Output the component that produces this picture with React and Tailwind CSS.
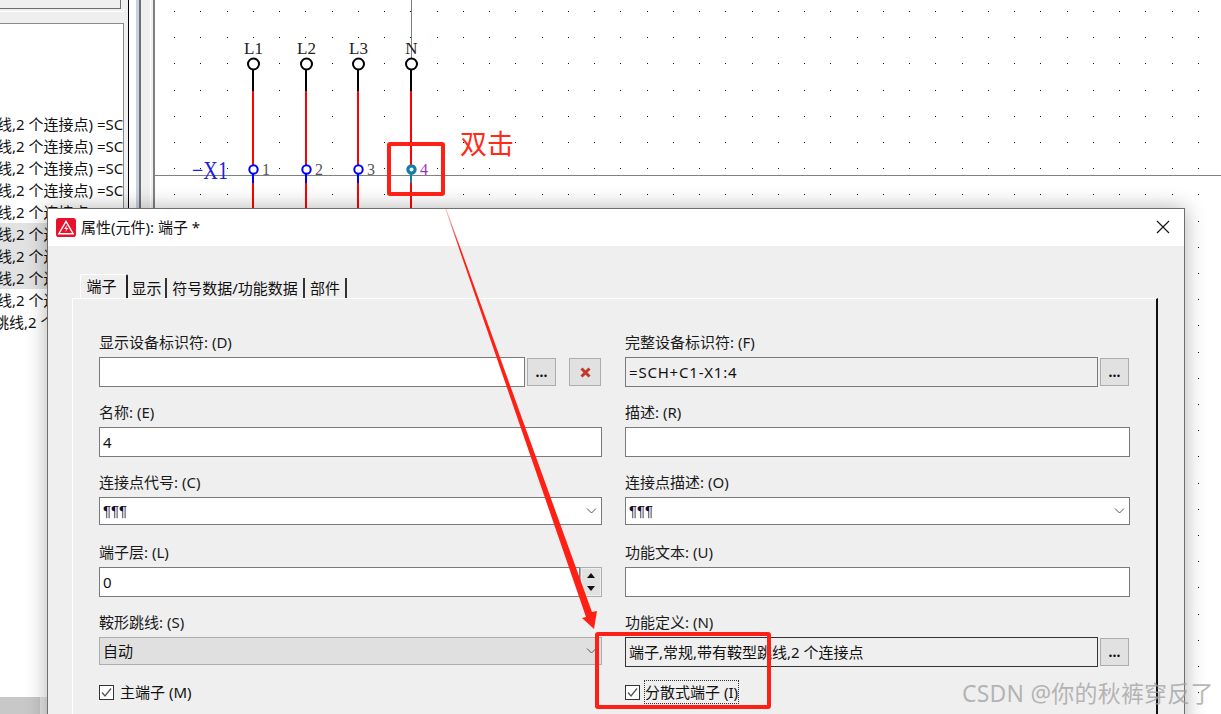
const dotXs = Array.from({ length: 41 }, (_, i) => Math.round(174 + i * 26.25))
const dotYs = Array.from({ length: 28 }, (_, i) => Math.round(11 + i * 26.2))

const listRows = [
  { y: 'bg-white', text: '线,2 个连接点) =SCH+C1', ml: '-ml-[3px]' },
  { y: 'bg-white', text: '线,2 个连接点) =SCH+C1', ml: '-ml-[3px]' },
  { y: 'bg-white', text: '线,2 个连接点) =SCH+C1', ml: '-ml-[3px]' },
  { y: 'bg-white', text: '线,2 个连接点) =SCH+C1', ml: '-ml-[3px]' },
  { y: 'bg-white', text: '线,2 个连接点) =SCH+C1', ml: '-ml-[3px]' },
  { y: 'bg-[#e2e2e2]', text: '线,2 个连接点) =SCH+C1', ml: '-ml-[3px]' },
  { y: 'bg-[#e2e2e2]', text: '线,2 个连接点) =SCH+C1', ml: '-ml-[3px]' },
  { y: 'bg-[#e2e2e2]', text: '线,2 个连接点) =SCH+C1', ml: '-ml-[3px]' },
  { y: 'bg-white', text: '线,2 个连接点) =SCH+C1', ml: '-ml-[3px]' },
  { y: 'bg-white', text: '跳线,2 个连接点) =SCH+C1', ml: '-ml-[6px]' },
]

const columns = [
  { x: 253, top: 'L1', num: '1' },
  { x: 306, top: 'L2', num: '2' },
  { x: 358, top: 'L3', num: '3' },
  { x: 411, top: 'N', num: '4' },
]

function Diagram() {
  return (
    <svg viewBox="155 0 1066 714" className="block w-[1066px] h-[714px]">
      {dotXs.map((x) =>
        dotYs.map((y) => <rect key={x + '-' + y} x={x} y={y} width="1" height="1" fill="#111" />)
      )}
      <line x1="155" y1="175.5" x2="1221" y2="175.5" stroke="#808080" />
      <line x1="411.5" y1="0" x2="411.5" y2="58" stroke="#808080" />
      {columns.map((c) => {
        const active = c.num === '4'
        const nodeColor = active ? '#0f7fa5' : '#0000ff'
        return (
          <g key={c.top}>
            <text x={c.x + 0.5} y="54" textAnchor="middle" fontFamily="Liberation Serif" fontSize="17" fill="#222">{c.top}</text>
            <circle cx={c.x + 0.5} cy="64" r="5.5" fill="#fff" stroke="#000" strokeWidth="2" />
            <line x1={c.x} y1="70" x2={c.x} y2="91" stroke="#000" strokeWidth="2" />
            <line x1={c.x} y1="91" x2={c.x} y2="165" stroke="#ff0000" strokeWidth="2" />
            <line x1={c.x} y1="174" x2={c.x} y2="183" stroke={nodeColor} strokeWidth="2" />
            <line x1={c.x} y1="183" x2={c.x} y2="214" stroke="#ff0000" strokeWidth="2" />
            <circle cx={c.x + 0.5} cy="169.5" r={active ? 3.6 : 4.2} fill="#fff" stroke={nodeColor} strokeWidth={active ? 3.2 : 2} />
            <text x={c.x + 9} y="175" fontFamily="Liberation Serif" fontSize="16" fill={active ? '#a030c0' : '#555'}>{c.num}</text>
          </g>
        )
      })}
      <text x="192" y="179" fontFamily="Liberation Serif" fontSize="26" fill="#1f1fe0" textLength="36" lengthAdjust="spacingAndGlyphs">−X1</text>
    </svg>
  )
}

function Label({ children }) {
  return <div className="h-5 mb-[5px] leading-5 text-[15px] text-[#1a1a1a]">{children}</div>
}

function TextBox({ value, className = '' }) {
  return (
    <div className={'h-[30px] px-[3px] flex items-center border border-[#7a7a7a] bg-white text-[15px] text-[#111] ' + className}>
      {value}
    </div>
  )
}

function Chevron() {
  return (
    <svg width="11" height="6" viewBox="0 0 11 6" className="shrink-0">
      <path d="M1 0.5 L5.5 5 L10 0.5" fill="none" stroke="#555" strokeWidth="1" />
    </svg>
  )
}

function Combo({ value, disabled, mark }) {
  return (
    <div className={'h-[28px] pl-[3px] pr-[4px] flex items-center justify-between border text-[15px] text-[#111] ' + (disabled ? 'bg-[#e0e0e0] border-[#adadad]' : 'bg-white border-[#7a7a7a]')}>
      <span className={mark ? "font-['Liberation_Sans',sans-serif] text-[#1a0a30]" : ''}>{value}</span>
      <Chevron />
    </div>
  )
}

function DotsButton() {
  return (
    <button className="w-[29px] h-[28px] shrink-0 bg-[#e1e1e1] border border-[#adadad] text-[14px] font-bold leading-[26px] text-[#111]">...</button>
  )
}

function Check({ label, focused }) {
  return (
    <div className="flex items-center h-5">
      <svg width="15" height="15" viewBox="0 0 15 15" className="shrink-0">
        <rect x="0.5" y="0.5" width="14" height="14" fill="#fff" stroke="#333" />
        <path d="M3 7.5 L6 11 L12 3.5" fill="none" stroke="#555" strokeWidth="1.3" />
      </svg>
      <span className={'text-[15px] text-[#111] leading-[22px] ' + (focused ? 'ml-[5px] outline-1 outline-dotted outline-[#333]' : 'ml-[6px]')}>{label}</span>
    </div>
  )
}

function Dialog() {
  return (
    <div className="absolute left-[47px] top-[208px] w-[1138px] h-[530px] flex flex-col bg-[#efefef] border border-[#6f6f6f] shadow-[0_0_20px_rgba(0,0,0,0.3)]">
      <div className="h-[37px] shrink-0 bg-white flex items-center pl-2 pr-[14px]">
        <svg width="20" height="19" viewBox="0 0 21 20" className="shrink-0">
          <rect width="21" height="20" rx="3" fill="#e8102a" />
          <path d="M10.5 3.5 L18 16.5 H3 Z" fill="none" stroke="#fff" strokeWidth="1.5" />
          <path d="M11.5 7 L8.5 11.5 H11 L9.5 15 L13 10.5 H10.8 Z" fill="#fff" />
        </svg>
        <span className="ml-[5px] text-[15px] text-[#111]">属性(元件): 端子 *</span>
        <svg width="14" height="14" viewBox="0 0 14 14" className="ml-auto -mt-[2px]">
          <path d="M1 1 L13 13 M13 1 L1 13" stroke="#111" strokeWidth="1.1" />
        </svg>
      </div>

      <div className="flex-1 flex flex-col pt-[28px] pl-[24px] min-h-0">
        {/* Tabs */}
        <div className="flex items-end h-6 ml-2 text-[15px] text-[#111]">
          <div className="w-[48px] h-6 pr-1 flex items-center justify-center border-t border-l border-white border-r-2 border-r-[#222] rounded-t-[2px]">端子</div>
          <div className="w-[39px] h-5 flex items-center justify-center border-r-2 border-[#333]">显示</div>
          <div className="w-[138px] h-5 flex items-center justify-center border-r-2 border-[#333]">符号数据/功能数据</div>
          <div className="w-[42px] h-5 flex items-center justify-center border-r-2 border-[#333]">部件</div>
        </div>

        {/* Tab panel */}
        <div className="w-[1086px] flex-1 pt-[33px] pl-[26px] border-t border-l border-white border-r-2 border-r-[#111]">
          <div className="grid grid-cols-[503px_505px] gap-x-[23px] auto-rows-[70px]">
            <div>
              <Label>显示设备标识符: (D)</Label>
              <div className="flex items-center">
                <TextBox value="" className="w-[426px]" />
                <div className="ml-[2px]"><DotsButton /></div>
                <button className="ml-[13px] w-[32px] h-[28px] flex items-center justify-center bg-[#e1e1e1] border border-[#adadad]">
                  <svg width="11" height="11" viewBox="0 0 11 11">
                    <path d="M1.5 1.5 L9.5 9.5 M9.5 1.5 L1.5 9.5" stroke="#c0392b" strokeWidth="3" />
                  </svg>
                </button>
              </div>
            </div>
            <div>
              <Label>完整设备标识符: (F)</Label>
              <div className="flex items-center">
                <TextBox value="=SCH+C1-X1:4" className="w-[473px] !bg-[#efefef] tracking-[0.8px]" />
                <div className="ml-[2px]"><DotsButton /></div>
              </div>
            </div>

            <div>
              <Label>名称: (E)</Label>
              <TextBox value="4" />
            </div>
            <div>
              <Label>描述: (R)</Label>
              <TextBox value="" />
            </div>

            <div>
              <Label>连接点代号: (C)</Label>
              <Combo value="¶¶¶" mark />
            </div>
            <div>
              <Label>连接点描述: (O)</Label>
              <Combo value="¶¶¶" mark />
            </div>

            <div>
              <Label>端子层: (L)</Label>
              <div className="flex">
                <TextBox value="0" className="w-[481px]" />
                <div className="w-[22px] h-[30px] flex flex-col justify-between p-px border border-[#adadad]">
                  <div className="h-[13px] bg-[#e1e1e1] flex items-center justify-center">
                    <svg width="8" height="5" viewBox="0 0 8 5"><path d="M4 0 L8 5 H0 Z" fill="#111" /></svg>
                  </div>
                  <div className="h-[13px] bg-[#e1e1e1] flex items-center justify-center">
                    <svg width="8" height="5" viewBox="0 0 8 5"><path d="M0 0 H8 L4 5 Z" fill="#111" /></svg>
                  </div>
                </div>
              </div>
            </div>
            <div>
              <Label>功能文本: (U)</Label>
              <TextBox value="" />
            </div>

            <div>
              <Label>鞍形跳线: (S)</Label>
              <Combo value="自动" disabled />
            </div>
            <div>
              <Label>功能定义: (N)</Label>
              <div className="flex items-center">
                <TextBox value="端子,常规,带有鞍型跳线,2 个连接点" className="w-[473px] !bg-[#efefef] !border-[#333]" />
                <div className="ml-[2px]"><DotsButton /></div>
              </div>
            </div>

            <Check label="主端子 (M)" />
            <Check label="分散式端子 (I)" focused />
          </div>
        </div>
      </div>
    </div>
  )
}

export default function App() {
  return (
    <div className="relative w-[1221px] h-[714px] overflow-hidden flex bg-white font-['Noto_Sans','Noto_Sans_CJK_SC',sans-serif]">
      {/* Left pane */}
      <div className="w-[128px] shrink-0 flex flex-col bg-[#efefef] border-r border-[#efefef]">
        <div className="h-[9px] w-[121px] shrink-0 border-b border-r border-[#6f6f6f]" />
        <div className="h-[3px] w-[124px] shrink-0 border-b border-r border-white" />
        <div className="h-[11px] shrink-0" />
        <div className="flex-1 w-[124px] flex flex-col border-t border-r border-[#8a8a8a] bg-white">
          <div className="h-[89px] shrink-0" />
          {listRows.map((r, i) => (
            <div key={i} className={'h-[22px] shrink-0 overflow-hidden whitespace-nowrap text-[15px] leading-[22px] text-[#111] ' + r.y}>
              <div className={r.ml}>{r.text}</div>
            </div>
          ))}
          <div className="flex-1" />
          <div className="h-[17px] shrink-0 flex bg-[#e4e4e4]">
            <div className="w-[40px] bg-[#c8c8c8]" />
          </div>
        </div>
      </div>

      {/* Splitter */}
      <div className="w-[27px] shrink-0 flex border-l border-black bg-[#efefef]">
        <div className="w-[7px] bg-white" />
        <div className="w-[3px] bg-[#c8d0e8]" />
        <div className="w-[2px] bg-[#707070]" />
        <div className="w-[9px]" />
        <div className="w-[1px] bg-white" />
        <div className="w-[2px]" />
        <div className="w-[2px] bg-[#808080]" />
      </div>

      {/* Canvas */}
      <div className="flex-1 min-w-0">
        <Diagram />
      </div>

      <Dialog />

      {/* Annotations */}
      <div className="absolute left-[387px] top-[142px] w-[58px] h-[54px] border-[4px] border-[#ff2015] rounded-[3px]" />
      <span className="absolute left-[460px] top-[125px] text-[27px] leading-[38px] text-[#ff2a1a]">双击</span>
      <svg viewBox="0 0 1221 714" className="absolute left-0 top-0 w-[1221px] h-[714px] pointer-events-none">
        <defs>
          <linearGradient id="arrowFade" gradientUnits="userSpaceOnUse" x1="0" y1="208" x2="0" y2="250">
            <stop offset="0" stopColor="#ff2015" stopOpacity="0.25" />
            <stop offset="1" stopColor="#ff2015" stopOpacity="1" />
          </linearGradient>
        </defs>
        <path d="M445 208 L446 208 L592 612 L597 611 L594 629 L582 618 L586 617 Z" fill="url(#arrowFade)" />
      </svg>
      <div className="absolute left-[595px] top-[632px] w-[176px] h-[77px] border-[4px] border-[#ff2015] rounded-[3px]" />
      <span className="absolute left-[962px] top-[677px] text-[23px] leading-[32px] tracking-[0.2px] whitespace-nowrap text-[#a0a0a0]/75">CSDN @你的秋裤穿反了</span>
    </div>
  )
}
